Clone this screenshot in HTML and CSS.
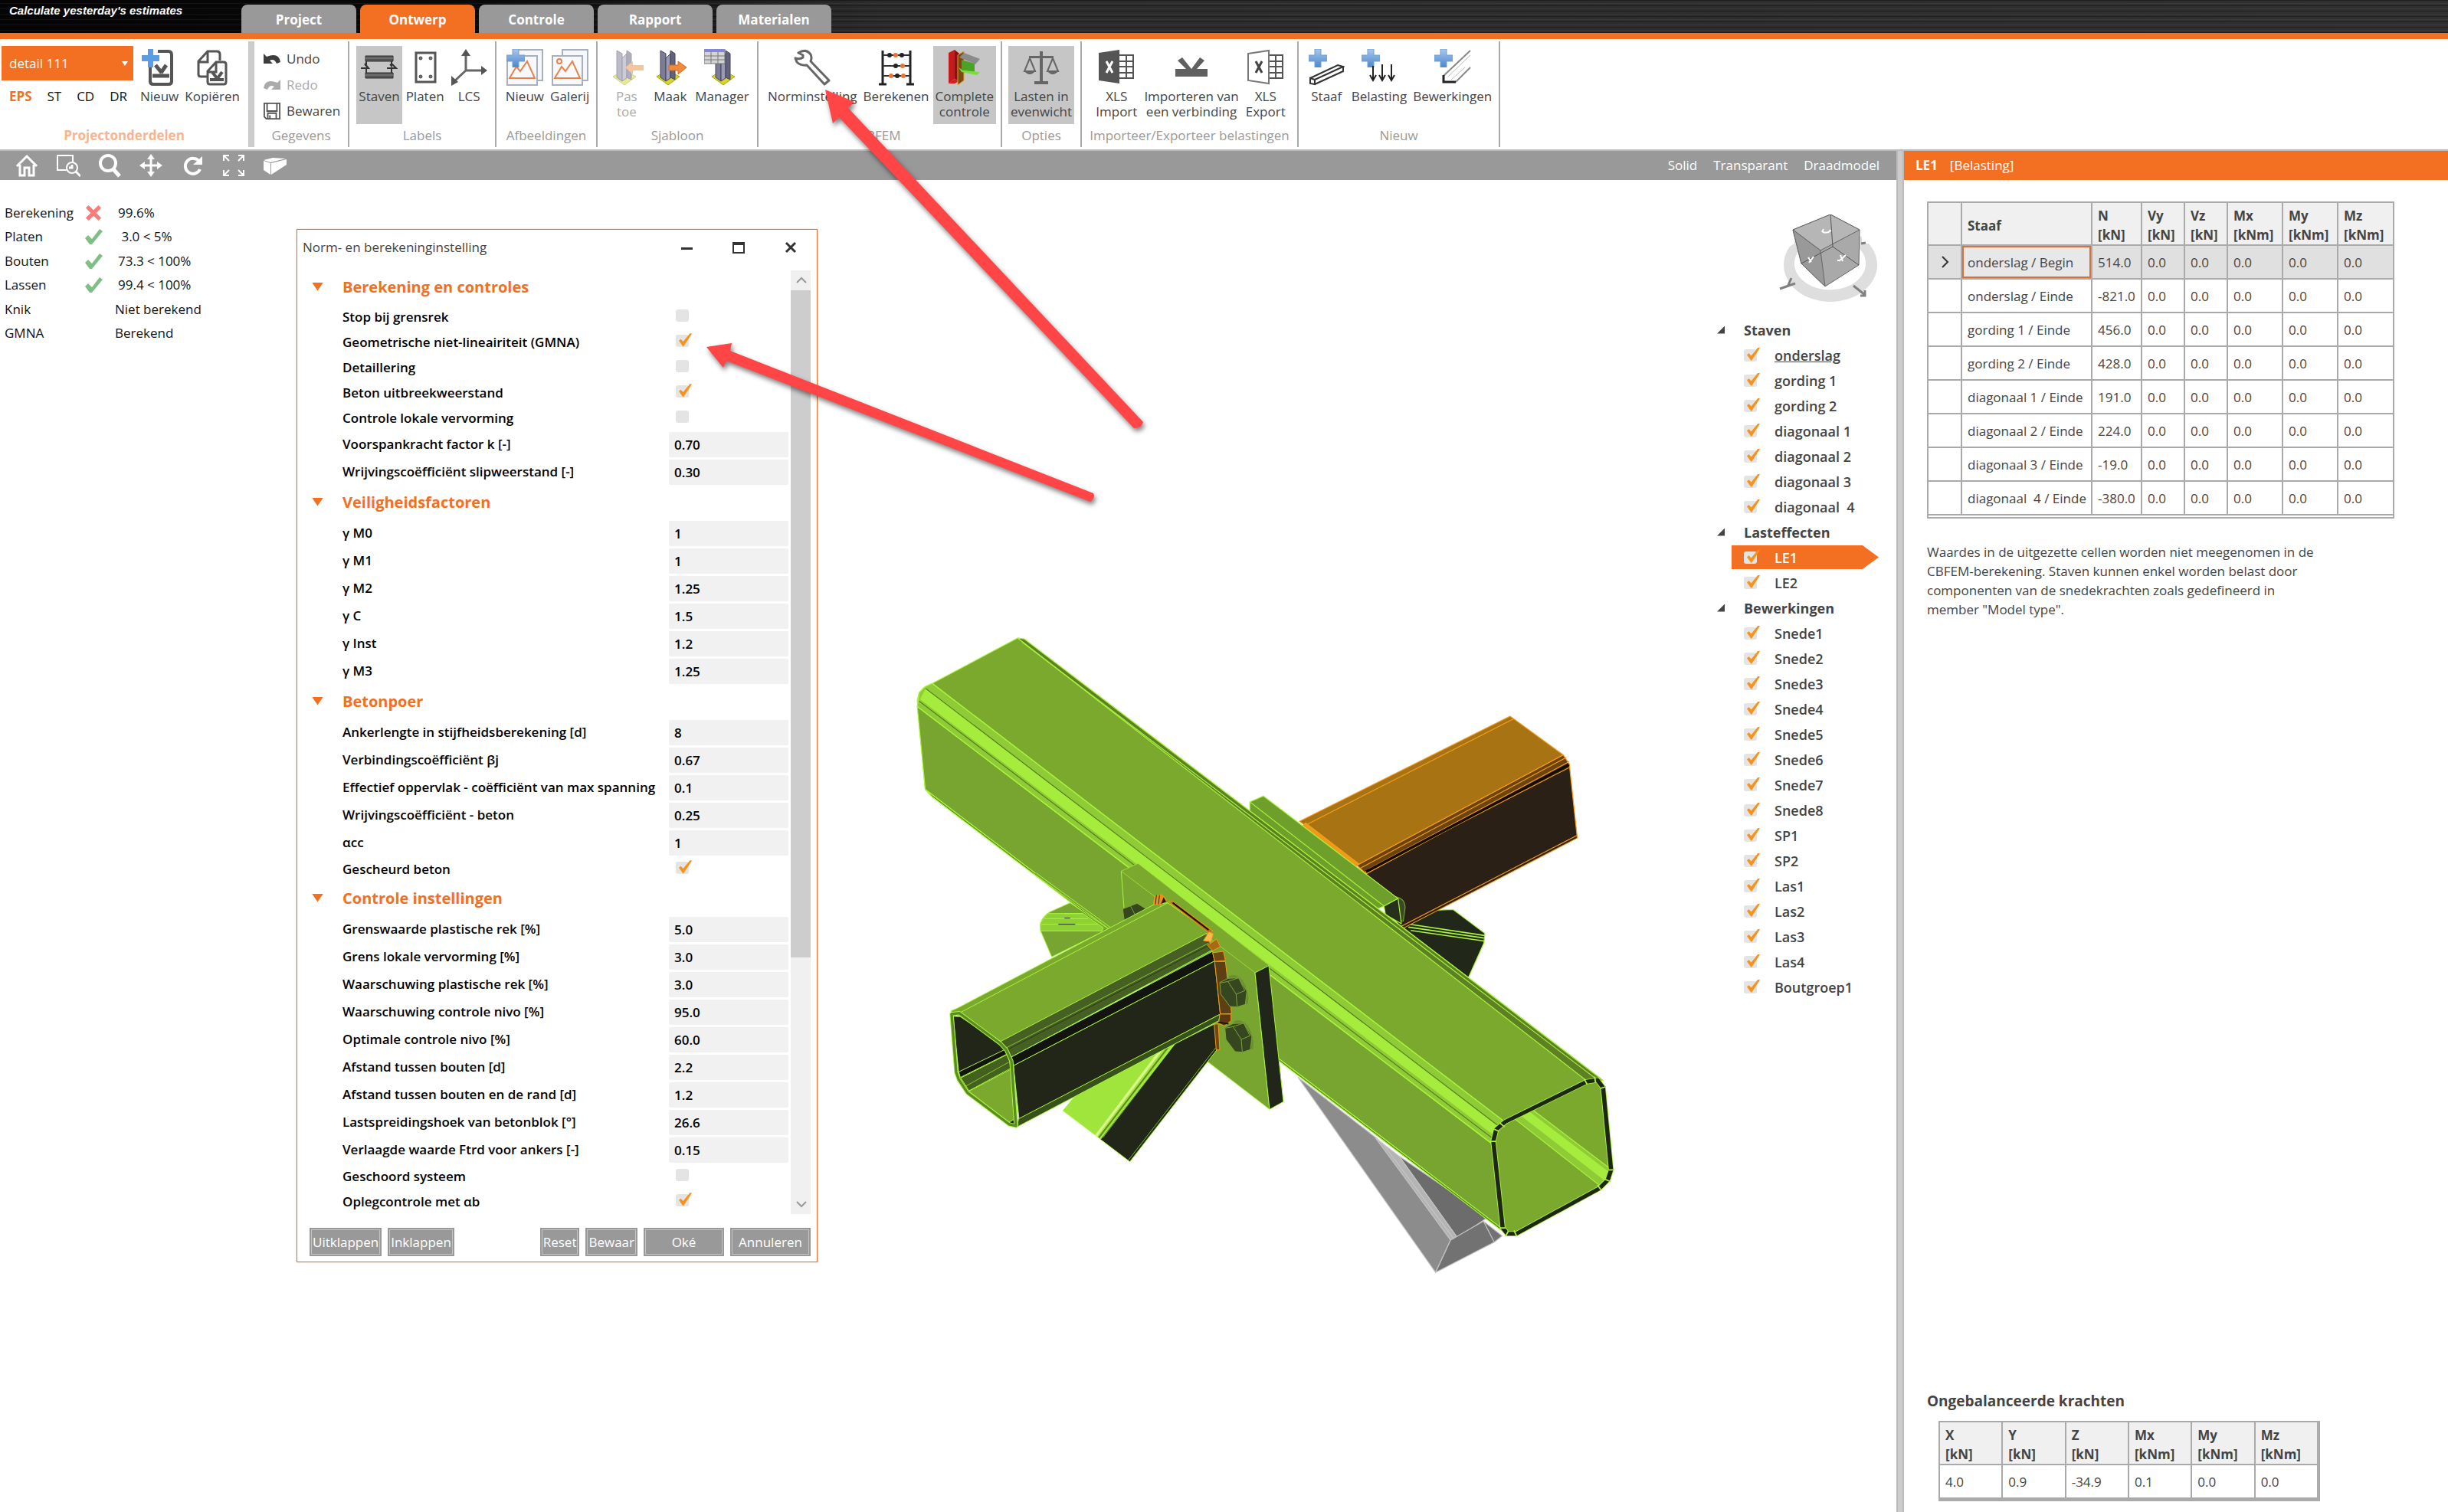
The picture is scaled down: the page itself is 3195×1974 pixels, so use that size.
FILE: index.html
```html
<!DOCTYPE html>
<html lang="nl">
<head>
<meta charset="utf-8">
<title>Verbinding – detail 111</title>
<link rel="stylesheet" href="styles.css">
</head>
<body>
<svg class="defs" aria-hidden="true">
  <defs>
    <linearGradient id="blue" x1="0" y1="0" x2="0" y2="1"><stop offset="0" stop-color="#a9c8ec"/><stop offset="1" stop-color="#4a86cc"/></linearGradient>
    <symbol id="plus" viewBox="0 0 24 24"><path d="M8 0h8v8h8v8h-8v8H8v-8H0V8h8z" fill="url(#blue)" stroke="#6f9fd6"/></symbol>
    <symbol id="column" viewBox="0 0 30 48"><path d="M0 36l14-8 16 8-15 11z" fill="#d6d62a" stroke="#a3a31a"/><path d="M5 2l7 4v36l-7-5z" fill="#7c7c96" stroke="#44445c"/><path d="M12 12l6-6v32l-6 4z" fill="#9a9ab4" stroke="#44445c"/><path d="M18 2l6 4v34l-6-3z" fill="#62627c" stroke="#44445c"/></symbol>
    <symbol id="picture" viewBox="0 0 48 48"><path d="M14 1h33v40H14z" fill="#f5f7fb" stroke="#a9b0bd" stroke-width="2"/><path d="M1 9h39v38H1z" fill="#f8f9fc" stroke="#a9b0bd" stroke-width="2"/><path d="M4 38l9-15 5 6 9-13 10 22z" fill="none" stroke="#e8824a" stroke-width="2"/></symbol>
    <symbol id="ok" viewBox="0 0 24 22"><path d="M1 13l4-4 5 5L20 1l4 3L10 21H7z" fill="#7fbf86"/></symbol>
  </defs>
</svg>

<header class="titlebar">
  <span class="slogan">Calculate yesterday's estimates</span>
  <nav class="tabs">
    <button class="tab">Project</button>
    <button class="tab tab-active">Ontwerp</button>
    <button class="tab">Controle</button>
    <button class="tab">Rapport</button>
    <button class="tab">Materialen</button>
  </nav>
</header>

<div class="ribbon">
  <section class="group group-project">
    <div class="items">
      <div class="picker">
        <select class="detail" aria-label="Detail"><option>detail 111</option></select>
        <div class="kinds">
          <button class="kind kind-active">EPS</button><button class="kind">ST</button><button class="kind">CD</button><button class="kind">DR</button>
        </div>
      </div>
      <button class="tool"><svg class="icon" viewBox="0 0 48 48"><path d="M12 22v20q0 4 4 4h20q4 0 4-4V8q0-5-4-5H22" fill="none" stroke="#555" stroke-width="4"/><path d="M15 35h22M19 21l8 10M33 21l-7 10" stroke="#555" stroke-width="5"/><path d="M9 0h7v8h8v8h-8v8H9v-8H1V8h8z" fill="#5a9de4"/></svg>Nieuw</button>
      <button class="tool"><svg class="icon" viewBox="0 0 48 48"><path d="M20 36H9q-3 0-3-3V16L18 3h12q4 0 4 4v8M6 17h12V3" fill="none" stroke="#555" stroke-width="3"/><path d="M18 29l11-12h10q3 0 3 3v23q0 3-3 3H21q-3 0-3-3zM18 30h11V17" fill="#fff" stroke="#555" stroke-width="3"/><path d="M21 40h18M24 30l6 8M37 30l-6 8" stroke="#555" stroke-width="4"/></svg>Kopiëren</button>
    </div>
    <h2 class="caption">Projectonderdelen</h2>
  </section>
  <section class="group group-data">
    <div class="items stack">
      <button class="line"><svg viewBox="0 0 24 20"><path d="M1 3v13h12l-4-4q6-3 9 4l5-2Q21 1 5 7z" fill="#3d3d3d"/></svg>Undo</button>
      <button class="line" disabled><svg viewBox="0 0 24 20"><path d="M23 3v13H11l4-4q-6-3-9 4l-5-2Q3 1 19 7z" fill="#aaa"/></svg>Redo</button>
      <button class="line"><svg viewBox="0 0 24 24"><path d="M1 1h22v22H4l-3-3zM5 1v11h14V1M6 23v-8h12v8M9 18v5" fill="none" stroke="#555" stroke-width="2"/></svg>Bewaren</button>
    </div>
    <h2 class="caption">Gegevens</h2>
  </section>
  <section class="group group-labels">
    <div class="items">
      <button class="tool tool-on"><svg class="icon" viewBox="0 0 48 48"><path d="M6 9h36v7H6zM6 31h36v7H6z" fill="#555" stroke="#333"/><path d="M6 12h36M6 34h36" stroke="#888"/><path d="M7 16v6l-2-2M0 25h10l-5-6M7 31v-5M40 16v6l-2-2M34 25h12l-6-6M40 31v-5" fill="none" stroke="#333" stroke-width="2"/></svg>Staven</button>
      <button class="tool"><svg class="icon" viewBox="0 0 48 48"><rect x="12" y="5" width="25" height="38" fill="none" stroke="#555" stroke-width="3"/><g fill="#777" stroke="#444"><circle cx="18" cy="12" r="2"/><circle cx="31" cy="12" r="2"/><circle cx="18" cy="36" r="2"/><circle cx="31" cy="36" r="2"/></g></svg>Platen</button>
      <button class="tool"><svg class="icon" viewBox="0 0 48 48"><path d="M20 6v22h24M20 28L5 42" fill="none" stroke="#666" stroke-width="3"/><path d="M20 0l6 9H14zM48 28l-8 6V22zM1 48V35l9 8z" fill="#555"/></svg>LCS</button>
    </div>
    <h2 class="caption">Labels</h2>
  </section>
  <section class="group group-images">
    <div class="items">
      <button class="tool"><svg class="icon" viewBox="0 0 48 48"><use href="#picture"/><use href="#plus" width="24" height="24"/></svg>Nieuw</button>
      <button class="tool"><svg class="icon" viewBox="0 0 48 48"><use href="#picture"/><circle cx="10" cy="16" r="3" fill="none" stroke="#e8824a" stroke-width="2"/></svg>Galerij</button>
    </div>
    <h2 class="caption">Afbeeldingen</h2>
  </section>
  <section class="group group-template">
    <div class="items">
      <button class="tool" disabled><svg class="icon faded" viewBox="0 0 48 48"><use href="#column" x="6" width="30" height="48"/><path d="M22 24l10-8v5h14v7H32v5z" fill="#f08a3c"/></svg>Pas<br>toe</button>
      <button class="tool"><svg class="icon" viewBox="0 0 48 48"><use href="#column" x="6" width="30" height="48"/><path d="M22 21h12v-5l11 8-11 9v-5H22z" fill="#f08a3c" stroke="#d86a1a"/></svg>Maak</button>
      <button class="tool"><svg class="icon" viewBox="0 0 48 48"><use href="#column" x="10" width="30" height="48"/><path d="M0 0h27v19H0z" fill="#d4d4d4" stroke="#777"/><path d="M0 0h27v4H0z" fill="#8585e0"/><path d="M0 9h27M0 14h27M9 4v15M18 4v15" stroke="#777"/></svg>Manager</button>
    </div>
    <h2 class="caption">Sjabloon</h2>
  </section>
  <section class="group group-cbfem">
    <div class="items">
      <button class="tool"><svg class="icon" viewBox="0 0 48 48"><path d="M6 5q10-6 16 2 2 5 0 9l24 25-6 5-23-25q-8 1-13-4l-2-5q6 2 10-1V8z" fill="#fff" stroke="#666" stroke-width="3" stroke-linejoin="round"/></svg>Norminstelling</button>
      <button class="tool"><svg class="icon" viewBox="0 0 48 48"><path d="M6 2v43M42 2v43M1 46h10M37 46h10" stroke="#222" stroke-width="3"/><path d="M6 8h36M6 22h36M6 35h36" stroke="#333" stroke-width="2"/><g fill="#222"><circle cx="15" cy="8" r="3"/><circle cx="31" cy="8" r="3"/><circle cx="23" cy="22" r="3"/><circle cx="25" cy="35" r="3"/></g><g fill="#f07030"><circle cx="23" cy="8" r="3"/><circle cx="32" cy="22" r="3"/><circle cx="17" cy="35" r="3"/><circle cx="33" cy="35" r="3"/></g></svg>Berekenen</button>
      <button class="tool tool-on"><svg class="icon" viewBox="0 0 48 48"><path d="M3 5l8-4v38l-8 6z" fill="#c41c1c"/><path d="M11 1l6 5v36l-6-3z" fill="#8e1010"/><path d="M3 45l8-6 6 3-6 3z" fill="#d42020"/><path d="M15 8l8-5v38l-8 6z" fill="#7a4a14" stroke="#e8a020"/><path d="M20 14l17 5v12l-17-4z" fill="#4aa322"/><path d="M16 24l6 4 22 2-4 4-20-4z" fill="#7ddc3a"/><path d="M17 11l6-6 21 8-6 7z" fill="#8b8b8b"/></svg>Complete<br>controle</button>
    </div>
    <h2 class="caption">CBFEM</h2>
  </section>
  <section class="group group-options">
    <div class="items">
      <button class="tool tool-on"><svg class="icon" viewBox="0 0 48 48"><path d="M22 3h4v39h-4zM15 42h18v4H15zM8 9h32v3H8z" fill="#666"/><path d="M9 12L2 29h14zM39 12l-7 17h14z" fill="none" stroke="#666" stroke-width="2"/><path d="M1 28h16q-8 10-16 0zM31 28h16q-8 10-16 0z" fill="#666"/></svg>Lasten in<br>evenwicht</button>
    </div>
    <h2 class="caption">Opties</h2>
  </section>
  <section class="group group-xls">
    <div class="items">
      <button class="tool"><svg class="icon" viewBox="0 0 48 48"><path d="M28 8h18v30H28M28 16h18M28 23h18M28 31h18M37 8v30" fill="none" stroke="#555" stroke-width="2"/><path d="M1 5l27-4v44L1 41z" fill="#555"/><path d="M11 16l8 15M19 16l-8 15" stroke="#fff" stroke-width="3"/></svg>XLS<br>Import</button>
      <button class="tool"><svg class="icon" viewBox="0 0 48 48"><path d="M3 26h14L6 15l6-4 12 15 11-15 6 4-10 11h14v10H3z" fill="#606060"/></svg>Importeren van<br>een verbinding</button>
      <button class="tool"><svg class="icon" viewBox="0 0 48 48"><path d="M28 8h18v30H28M28 16h18M28 23h18M28 31h18M37 8v30" fill="none" stroke="#555" stroke-width="2"/><path d="M1 6l27-4v43L1 41z" fill="#fff" stroke="#777" stroke-width="2"/><path d="M11 16l8 15M19 16l-8 15" stroke="#444" stroke-width="3"/></svg>XLS<br>Export</button>
    </div>
    <h2 class="caption">Importeer/Exporteer belastingen</h2>
  </section>
  <section class="group group-new">
    <div class="items">
      <button class="tool"><svg class="icon" viewBox="0 0 48 48"><use href="#plus" x="1" width="24" height="24"/><path d="M3 38l6 2v6l-6-1zM3 38l36-17 7 2-37 17M46 23v6L9 46" fill="#fff" stroke="#333" stroke-width="2"/></svg>Staaf</button>
      <button class="tool"><svg class="icon" viewBox="0 0 48 48"><use href="#plus" x="1" width="24" height="24"/><path d="M16 22v18m-4-6l4 7 4-7M28 20v20m-4-6l4 7 4-7M40 20v20m-4-6l4 7 4-7" fill="none" stroke="#222" stroke-width="2"/></svg>Belasting</button>
      <button class="tool"><svg class="icon" viewBox="0 0 48 48"><use href="#plus" width="24" height="24"/><path d="M47 2L12 35M47 24L28 43" stroke="#888" stroke-width="2" fill="none"/><path d="M47 8L18 36M40 24L22 40" stroke="#bbb" fill="none"/><path d="M12 34v9h16" stroke="#222" stroke-width="3" fill="none"/></svg>Bewerkingen</button>
    </div>
    <h2 class="caption">Nieuw</h2>
  </section>
</div>

<main class="workspace">
  <section class="scene">
    <div class="viewbar">
      <button class="view" aria-label="Begin"><svg viewBox="0 0 32 32"><path d="M3 17L16 4l13 13M7 15v14h6V19h6v10h6V15" fill="none" stroke="#fff" stroke-width="3"/></svg></button>
      <button class="view" aria-label="Zoom venster"><svg viewBox="0 0 32 32"><path d="M15 22H2V3h20v9" fill="none" stroke="#fff" stroke-width="2"/><circle cx="21" cy="19" r="7" fill="none" stroke="#fff" stroke-width="2"/><path d="M26 24l6 6M21 15v4h-4" stroke="#fff" stroke-width="3" fill="none"/></svg></button>
      <button class="view" aria-label="Zoom"><svg viewBox="0 0 32 32"><circle cx="14" cy="13" r="10" fill="none" stroke="#fff" stroke-width="4"/><path d="M21 21l8 9" stroke="#fff" stroke-width="5"/></svg></button>
      <button class="view" aria-label="Verplaatsen"><svg viewBox="0 0 32 32"><path d="M16 5v22M5 16h22" stroke="#fff" stroke-width="3"/><path d="M16 1l5 7H11zM16 31l5-7H11zM1 16l7-5v10zM31 16l-7-5v10z" fill="#fff"/></svg></button>
      <button class="view" aria-label="Roteren"><svg viewBox="0 0 32 32"><path d="M25 11A10 10 0 1 0 26 21" fill="none" stroke="#fff" stroke-width="4"/><path d="M29 4v11H17z" fill="#fff"/></svg></button>
      <button class="view" aria-label="Passend"><svg viewBox="0 0 32 32"><path d="M3 10V3h7M3 3l7 7M22 3h7v7M29 3l-7 7M3 22v7h7M3 29l7-7M22 29h7v-7M29 29l-7-7" fill="none" stroke="#fff" stroke-width="2"/></svg></button>
      <button class="view" aria-label="Perspectief"><svg viewBox="0 0 32 32"><path d="M1 10l9 3v15L1 22zM11 13l20-5v7L11 28zM1 9l12-3 17 1-20 5z" fill="#fff"/></svg></button>
      <div class="modes"><button class="mode">Solid</button><button class="mode">Transparant</button><button class="mode">Draadmodel</button></div>
    </div>

    <div class="canvas">
      <dl class="checks">
        <dt>Berekening</dt><dd class="mark"><svg viewBox="0 0 24 24"><path d="M1 5l4-4 7 7 7-7 4 4-7 7 7 7-4 4-7-7-7 7-4-4 7-7z" fill="#f87c7c"/></svg></dd><dd class="num">99.6%</dd>
        <dt>Platen</dt><dd class="mark"><svg><use href="#ok"/></svg></dd><dd class="num">&nbsp;3.0 &lt; 5%</dd>
        <dt>Bouten</dt><dd class="mark"><svg><use href="#ok"/></svg></dd><dd class="num">73.3 &lt; 100%</dd>
        <dt>Lassen</dt><dd class="mark"><svg><use href="#ok"/></svg></dd><dd class="num">99.4 &lt; 100%</dd>
        <dt>Knik</dt><dd class="mark"></dd><dd>Niet berekend</dd>
        <dt>GMNA</dt><dd class="mark"></dd><dd>Berekend</dd>
      </dl>

      <svg class="model" viewBox="0 0 960 860" aria-label="3D-model van de verbinding" role="img">
        <g transform="scale(.61224 .54847)" stroke-width="2" stroke-linejoin="round">
          <g stroke="#c4c4c4">
            <path d="M840 1088L1010 1235L1165 1475L1133 1552z" fill="#8c8c8c"/>
            <path d="M1055 1275L1245 1420L1180 1470z" fill="#6c6c6c"/>
            <path d="M1005 1232L1055 1275L1180 1470L1165 1475z" fill="#b4b4b4"/>
            <path d="M1165 1475L1235 1430L1275 1465L1258 1480L1133 1552z" fill="#727272"/>
            <path d="M1235 1430L1258 1480M1022 1248L1172 1472" fill="none"/>
          </g>
          <g stroke="#a9f53c">
            <path d="M1050 735L1130 690L1170 688L1238 745L1236 768L1203 850z" fill="#212819"/>
            <path d="M1070 722L1238 750M1075 730L1236 756M1080 738L1236 763" stroke-width="3" fill="none"/>
          </g>
          <g stroke="#f89c1c">
            <path d="M985 603L1418 342L1435 518L1060 735z" fill="#2a2015"/>
            <path d="M965 583L1405 320L1418 342L985 603z" fill="#6a430f"/>
            <path d="M972 590L1412 326M990 592L1418 336M982 600L1418 350" fill="none"/>
            <path d="M985 598L1417 343" stroke="#120c04" stroke-width="6"/>
            <path d="M843 478L1292 228L1405 320L965 583z" fill="#a87413"/>
            <path d="M860 485L1300 234M1060 728L1434 512" fill="none"/>
            <path d="M843 497L856 482L970 580L955 590z" fill="#f09b18"/>
          </g>
          <g stroke="#a9f53c">
            <path d="M1048 658q20 4 20 26l-4 32-12-4z" fill="#3a4a24" stroke="#6f9a30"/>
            <path d="M737 432L766 418L1053 662L1023 680L980 700L737 480z" fill="#6f9f2b"/>
            <path d="M737 432L1023 680" fill="none"/>
            <path d="M1023 680L1053 662L1060 722L1026 700z" fill="#26301a"/>
            <path d="M28 190L32 172L44 158L60 150L242 42L256 44L1485 1090L1275 1450L60 420L45 402z" fill="#7ba92e"/>
            <path d="M242 42L256 44L1490 1095L1460 1100z" fill="#5c8023"/>
            <path d="M45 402L60 420L1285 1462L1275 1448z" fill="#567a22"/>
            <path d="M28 205L1256 1248L1275 1448L45 402z" fill="#78a530"/>
            <path d="M60 150L1282 1195L1262 1212L1256 1248L28 205L32 172L44 158z" fill="#8fcb36"/>
            <path d="M46 162L1268 1206L1258 1226L34 188z" fill="#a5ec3c" stroke="none"/>
            <path d="M46 162L1268 1204M32 192L1256 1234" fill="none" stroke="#4f7a1c"/>
            <path d="M60 150L1282 1195M28 205L1256 1248M252 52L1476 1092" fill="none"/>
          </g>
          <path d="M1256 1240L1262 1212L1282 1193L1455 1098L1478 1094L1490 1112L1507 1308L1500 1332L1482 1352L1305 1460L1286 1460L1276 1446z" fill="#7ba92e"/>
          <path d="M1300 1185L1340 1165L1505 1305L1486 1348z" fill="#8fcb36"/>
          <path d="M1316 1180L1334 1170L1504 1314L1494 1334z" fill="#a5ec3c"/>
          <path d="M1300 1185L1486 1348M1340 1165L1505 1305" stroke="#a9f53c" fill="none"/>
          <path d="M1256 1240L1262 1212L1282 1193L1455 1098L1478 1094L1490 1112L1507 1308L1500 1332L1482 1352L1305 1460L1286 1460L1276 1446z" fill="none" stroke="#a9f53c" stroke-width="12"/>
          <path d="M1256 1240L1262 1212L1282 1193L1455 1098L1478 1094L1490 1112L1507 1308L1500 1332L1482 1352L1305 1460L1286 1460L1276 1446z" fill="none" stroke="#1f2615" stroke-width="9"/>
          <path d="M1250 1240h12M1256 1210l12 6M1270 1196l10 10M1450 1092l6 12M1472 1086l2 14M1484 1114l12-4M1502 1308h12M1494 1330l12 6M1478 1344l8 12M1300 1452l6 14M1282 1466l6-12M1270 1446h12" stroke="#a9f53c" stroke-width="3"/>
        </g>
        <g transform="translate(40 330) scale(.33333)" stroke="#a9f53c" stroke-width="3" stroke-linejoin="round">
          <path d="M530 116L450 152Q405 180 414 225L458 328L680 218z" fill="#78a530"/>
          <path d="M440 158L580 158L660 214L655 226L414 226L414 196z" fill="#8ed036"/>
          <path d="M430 178H600M416 200H640M508 158H580" fill="none"/><path d="M508 176h22M484 200h66" stroke="#1f2615"/>
          <path d="M384 0L680 218L720 200L460 0z" fill="#78a530" stroke="none"/>
          <path d="M384 0L680 216M398 0L690 214" fill="none"/>
          <path d="M730 -8L796 -38L1310 362L1365 895L1311 925L1068 738L900 560L745 185z" fill="#78a530" stroke="none"/>
          <path d="M730 -8L796 -38L1310 362L1254 390z" fill="#7ba92e" stroke-width="2"/>
          <path d="M730 -8L745 190M1254 390L1311 925L1068 738" fill="none"/>
          <path d="M1254 390L1308 362L1365 895L1311 925z" fill="#21261a"/>
          <path d="M736 140L792 118L828 140L820 160L742 186z" fill="#36461f" stroke="#7ba43a"/>
          <path d="M764 124L784 162L828 148M760 112Q800 96 828 136" fill="none" stroke="#7ba43a"/>
          <path d="M502 930L560 860L900 680L940 668L650 1042z" fill="#a0e53c"/>
          <path d="M648 1042L940 668L1096 590L1106 690L764 1130z" fill="#212619"/>
          <path d="M632 1028L888 690" stroke="#d9f98c" stroke-width="10"/>
          <path d="M642 1036L915 680" stroke="#5f8a22" stroke-width="6"/>
          <path d="M650 1042L930 676M658 1036L938 672M758 1124L1100 684" stroke-width="2" fill="none"/>
          <path d="M62 540L90 528L860 122L912 116L1085 236L1068 260L255 664z" fill="#7ba92e"/>
          <path d="M100 546L912 116" fill="none"/>
          <path d="M252 662L1064 236L1088 300L296 722z" fill="#465f22"/>
          <path d="M272 688L1072 274" stroke-width="2"/><path d="M276 696L1074 282" stroke="#1f2615" stroke-width="2"/>
          <path d="M296 722L1088 306L1096 344L308 754z" fill="#13130f"/>
          <path d="M308 754L1096 344L1118 552L330 964z" fill="#212619"/>
          <path d="M328 962L1118 552L1112 578L322 994z" fill="#38501c"/>
          <path d="M72 560L100 562L252 662L274 688L296 722L308 754L326 988L304 990L132 862L96 806z" fill="#212619"/>
          <path d="M94 778L276 690L288 706L100 800z" fill="#13130f"/>
          <path d="M102 802L288 708L298 764L134 852z" fill="#44601f"/>
          <path d="M134 854L298 768L318 960L290 976z" fill="#7ba92e"/>
          <path d="M118 836L290 740" stroke-width="2"/>
          <path d="M66 552L96 548L256 666L280 692L300 736L318 990L292 984L128 860L94 808L84 780z" fill="none" stroke-width="16"/>
          <path d="M66 552L96 548L256 666L280 692L300 736L318 990L292 984L128 860L94 808L84 780z" fill="none" stroke="#5d8a26" stroke-width="10"/>
          <g stroke="#f49a1c">
            <path d="M856 120L862 90L890 84L908 104L884 124z" fill="#e8901a"/><path d="M886 120L896 94L906 112z" fill="#2a1a08" stroke="none"/><path d="M868 86l-4 36M880 86l-4 36" stroke="#3a220a"/>
            <path d="M914 110L932 110L1088 226L1076 236z" fill="#b06c14"/><path d="M932 116L1072 222" stroke="#1a1006" stroke-width="6"/>
            <path d="M1052 264L1074 230L1090 238L1082 268z" fill="#ffb850"/>
            <path d="M1068 282L1104 258L1118 288L1088 304z" fill="#a86a14"/>
            <path d="M1088 312L1130 306L1138 342L1096 346z" fill="#6e4812"/>
            <path d="M1096 346L1138 346L1162 550L1118 552z" fill="#5c4014"/>
            <path d="M1116 552L1160 552L1160 578L1134 598L1112 588z" fill="#5c3a10"/>
            <path d="M1110 584L1150 590" stroke="#1a1006" stroke-width="5"/>
            <path d="M1094 592L1110 590L1116 692L1102 692z" fill="#6e4812"/>
          </g>
          <g id="bolt" stroke="#7ba43a">
            <path d="M1148 404Q1176 386 1206 418Q1236 468 1228 512L1190 520z" fill="#688f2c"/>
            <path d="M1116 428L1148 412L1190 410L1222 462L1216 514L1184 524L1156 522L1120 474z" fill="#36461f"/>
            <path d="M1148 424L1180 474L1214 460L1190 410M1180 474L1184 522M1118 430L1148 424L1190 410" fill="none"/>
          </g>
          <use href="#bolt" x="20" y="177"/>
        </g>
      </svg>

      <aside class="side">
        <svg class="cube" viewBox="0 0 130 116" aria-label="Oriëntatie" role="img">
          <path fill-rule="evenodd" d="M6 66a60 48 0 1 1 122 0a61 48 0 0 1-122 0zM20 66a46 34 0 1 0 93-4a46 34 0 0 0-93 4z" fill="#dedede"/>
          <path d="M0 0h130v38H108V20H20v18L0 50z" fill="#fff"/>
          <path d="M18 20L67 0L105 20L104 66L60 94L29 64z" fill="#a9a9a9" stroke="#666"/>
          <path d="M18 20L67 0L105 20L54 47z" fill="#b6b6b6" stroke="#666"/>
          <path d="M18 20L54 47L60 94L29 64z" fill="#999" stroke="#666"/>
          <path d="M67 0L70 42L29 64M70 42L104 66" fill="none" stroke="#555"/>
          <path d="M56 22q4 4 12-1M58 19l-2 4M64 24l3-4M38 56l4 6M45 55l-6 8M80 53l3 8M87 53l-9 8M76 60h3" stroke="#fff" stroke-width="2" fill="none"/>
          <path d="M1 97L21 90M12 92L16 83M97 93L112 105M112 99v7h-6M107 38l6-1" stroke="#808080" stroke-width="3" fill="none"/>
        </svg>
        <ul class="tree">
          <li class="branch">Staven</li>
          <li><label class="leaf"><input type="checkbox" checked><u>onderslag</u></label></li>
          <li><label class="leaf"><input type="checkbox" checked>gording 1</label></li>
          <li><label class="leaf"><input type="checkbox" checked>gording 2</label></li>
          <li><label class="leaf"><input type="checkbox" checked>diagonaal 1</label></li>
          <li><label class="leaf"><input type="checkbox" checked>diagonaal 2</label></li>
          <li><label class="leaf"><input type="checkbox" checked>diagonaal 3</label></li>
          <li><label class="leaf"><input type="checkbox" checked>diagonaal&nbsp; 4</label></li>
          <li class="branch">Lasteffecten</li>
          <li><label class="leaf leaf-on"><input type="checkbox" checked>LE1</label></li>
          <li><label class="leaf"><input type="checkbox" checked>LE2</label></li>
          <li class="branch">Bewerkingen</li>
          <li><label class="leaf"><input type="checkbox" checked>Snede1</label></li>
          <li><label class="leaf"><input type="checkbox" checked>Snede2</label></li>
          <li><label class="leaf"><input type="checkbox" checked>Snede3</label></li>
          <li><label class="leaf"><input type="checkbox" checked>Snede4</label></li>
          <li><label class="leaf"><input type="checkbox" checked>Snede5</label></li>
          <li><label class="leaf"><input type="checkbox" checked>Snede6</label></li>
          <li><label class="leaf"><input type="checkbox" checked>Snede7</label></li>
          <li><label class="leaf"><input type="checkbox" checked>Snede8</label></li>
          <li><label class="leaf"><input type="checkbox" checked>SP1</label></li>
          <li><label class="leaf"><input type="checkbox" checked>SP2</label></li>
          <li><label class="leaf"><input type="checkbox" checked>Las1</label></li>
          <li><label class="leaf"><input type="checkbox" checked>Las2</label></li>
          <li><label class="leaf"><input type="checkbox" checked>Las3</label></li>
          <li><label class="leaf"><input type="checkbox" checked>Las4</label></li>
          <li><label class="leaf"><input type="checkbox" checked>Boutgroep1</label></li>
        </ul>
      </aside>

      <section class="dialog" role="dialog" aria-labelledby="dialog-title">
        <div class="dialog-head">
          <h2 class="dialog-title" id="dialog-title">Norm- en berekeninginstelling</h2>
          <button class="win" aria-label="Minimaliseren"><svg viewBox="0 0 16 16"><path d="M1 8h15v3H1z" fill="#333"/></svg></button>
          <button class="win" aria-label="Maximaliseren"><svg viewBox="0 0 16 16"><path d="M1 2h14v13H1z" fill="none" stroke="#333" stroke-width="2"/><path d="M0 1h16v4H0z" fill="#333"/></svg></button>
          <button class="win" aria-label="Sluiten"><svg viewBox="0 0 16 16"><path d="M2 2l12 12M14 2L2 14" stroke="#333" stroke-width="3"/></svg></button>
        </div>
        <div class="dialog-body">
          <div class="settings">
            <h3 class="section">Berekening en controles</h3>
            <label class="check">Stop bij grensrek<input type="checkbox"></label>
            <label class="check">Geometrische niet-lineairiteit (GMNA)<input type="checkbox" checked></label>
            <label class="check">Detaillering<input type="checkbox"></label>
            <label class="check">Beton uitbreekweerstand<input type="checkbox" checked></label>
            <label class="check">Controle lokale vervorming<input type="checkbox"></label>
            <label class="field">Voorspankracht factor k [-]<input type="text" value="0.70"></label>
            <label class="field">Wrijvingscoëfficiënt slipweerstand [-]<input type="text" value="0.30"></label>
            <h3 class="section">Veiligheidsfactoren</h3>
            <label class="field">γ M0<input type="text" value="1"></label>
            <label class="field">γ M1<input type="text" value="1"></label>
            <label class="field">γ M2<input type="text" value="1.25"></label>
            <label class="field">γ C<input type="text" value="1.5"></label>
            <label class="field">γ Inst<input type="text" value="1.2"></label>
            <label class="field">γ M3<input type="text" value="1.25"></label>
            <h3 class="section">Betonpoer</h3>
            <label class="field">Ankerlengte in stijfheidsberekening [d]<input type="text" value="8"></label>
            <label class="field">Verbindingscoëfficiënt βj<input type="text" value="0.67"></label>
            <label class="field">Effectief oppervlak - coëfficiënt van max spanning<input type="text" value="0.1"></label>
            <label class="field">Wrijvingscoëfficiënt - beton<input type="text" value="0.25"></label>
            <label class="field">αcc<input type="text" value="1"></label>
            <label class="check">Gescheurd beton<input type="checkbox" checked></label>
            <h3 class="section">Controle instellingen</h3>
            <label class="field">Grenswaarde plastische rek [%]<input type="text" value="5.0"></label>
            <label class="field">Grens lokale vervorming [%]<input type="text" value="3.0"></label>
            <label class="field">Waarschuwing plastische rek [%]<input type="text" value="3.0"></label>
            <label class="field">Waarschuwing controle nivo [%]<input type="text" value="95.0"></label>
            <label class="field">Optimale controle nivo [%]<input type="text" value="60.0"></label>
            <label class="field">Afstand tussen bouten [d]<input type="text" value="2.2"></label>
            <label class="field">Afstand tussen bouten en de rand [d]<input type="text" value="1.2"></label>
            <label class="field">Lastspreidingshoek van betonblok [°]<input type="text" value="26.6"></label>
            <label class="field">Verlaagde waarde Ftrd voor ankers [-]<input type="text" value="0.15"></label>
            <label class="check">Geschoord systeem<input type="checkbox"></label>
            <label class="check">Oplegcontrole met αb<input type="checkbox" checked></label>
          </div>
          <div class="scroll">
            <button class="scroll-end" aria-label="Omhoog"><svg viewBox="0 0 26 26"><path d="M8 16l6-6 6 6" fill="none" stroke="#999" stroke-width="2"/></svg></button>
            <div class="thumb"></div>
            <button class="scroll-end" aria-label="Omlaag"><svg viewBox="0 0 26 26"><path d="M8 10l6 6 6-6" fill="none" stroke="#999" stroke-width="2"/></svg></button>
          </div>
        </div>
        <div class="dialog-foot">
          <button class="push">Uitklappen</button>
          <button class="push">Inklappen</button>
          <span class="spacer"></span>
          <button class="push">Reset</button>
          <button class="push">Bewaar</button>
          <button class="push push-wide">Oké</button>
          <button class="push push-wide">Annuleren</button>
        </div>
      </section>
    </div>
  </section>

  <div class="splitter"></div>

  <section class="panel">
    <h2 class="panel-head"><b>LE1</b><span>[Belasting]</span></h2>
    <div class="panel-body">
      <div class="frame">
        <table class="grid loads">
          <colgroup><col class="c-mark"><col class="c-name"><col class="c-n"><col class="c-v"><col class="c-v"><col class="c-m"><col class="c-m"><col></colgroup>
          <thead><tr><th></th><th>Staaf</th><th>N<br>[kN]</th><th>Vy<br>[kN]</th><th>Vz<br>[kN]</th><th>Mx<br>[kNm]</th><th>My<br>[kNm]</th><th>Mz<br>[kNm]</th></tr></thead>
          <tbody>
            <tr class="current"><td class="marker"><svg viewBox="0 0 12 16"><path d="M2 1l7 7-7 7" fill="none" stroke="#333" stroke-width="2"/></svg></td><td class="focus">onderslag / Begin</td><td>514.0</td><td>0.0</td><td>0.0</td><td>0.0</td><td>0.0</td><td>0.0</td></tr>
            <tr><td></td><td>onderslag / Einde</td><td>-821.0</td><td>0.0</td><td>0.0</td><td>0.0</td><td>0.0</td><td>0.0</td></tr>
            <tr><td></td><td>gording 1 / Einde</td><td>456.0</td><td>0.0</td><td>0.0</td><td>0.0</td><td>0.0</td><td>0.0</td></tr>
            <tr><td></td><td>gording 2 / Einde</td><td>428.0</td><td>0.0</td><td>0.0</td><td>0.0</td><td>0.0</td><td>0.0</td></tr>
            <tr><td></td><td>diagonaal 1 / Einde</td><td>191.0</td><td>0.0</td><td>0.0</td><td>0.0</td><td>0.0</td><td>0.0</td></tr>
            <tr><td></td><td>diagonaal 2 / Einde</td><td>224.0</td><td>0.0</td><td>0.0</td><td>0.0</td><td>0.0</td><td>0.0</td></tr>
            <tr><td></td><td>diagonaal 3 / Einde</td><td>-19.0</td><td>0.0</td><td>0.0</td><td>0.0</td><td>0.0</td><td>0.0</td></tr>
            <tr><td></td><td>diagonaal&nbsp; 4 / Einde</td><td>-380.0</td><td>0.0</td><td>0.0</td><td>0.0</td><td>0.0</td><td>0.0</td></tr>
          </tbody>
        </table>
      </div>
      <p class="note">Waardes in de uitgezette cellen worden niet meegenomen in de CBFEM-berekening. Staven kunnen enkel worden belast door componenten van de snedekrachten zoals gedefineerd in member "Model type".</p>
      <h3 class="subhead">Ongebalanceerde krachten</h3>
      <div class="frame frame-small">
        <table class="grid">
          <thead><tr><th>X<br>[kN]</th><th>Y<br>[kN]</th><th>Z<br>[kN]</th><th>Mx<br>[kNm]</th><th>My<br>[kNm]</th><th>Mz<br>[kNm]</th></tr></thead>
          <tbody><tr><td>4.0</td><td>0.9</td><td>-34.9</td><td>0.1</td><td>0.0</td><td>0.0</td></tr></tbody>
        </table>
      </div>
    </div>
  </section>
</main>

<svg class="arrows" viewBox="900 100 620 580" aria-hidden="true">
  <path d="M1077 117L1115 133L1107 141L1492 551Q1490 559 1480 559L1095 153L1087 161z" fill="#ff4545"/>
  <path d="M922 453L955 448L953 458L1427 644Q1430 650 1423 655L948 471L944 480z" fill="#ff4545"/>
</svg>
</body>
</html>
```
FILE: styles.css
```css
* { box-sizing: border-box; }

body {
  margin: 0;
  min-height: 100vh;
  display: flex;
  flex-direction: column;
  position: relative;
  background: #fff;
  color: #444;
  font: 17px/20px "Open Sans", "Noto Sans", sans-serif;
}

h2, h3, p, dl, dd, ul { margin: 0; padding: 0; font-weight: 400; font-size: inherit; }
ul { list-style: none; }
svg { display: block; }
.defs { position: absolute; width: 0; height: 0; }

button {
  margin: 0;
  padding: 0;
  border: 0;
  background: none;
  color: inherit;
  font: inherit;
}
button:disabled { color: #aaa; }

/* title bar and tabs */
.titlebar {
  height: 51px;
  display: flex;
  align-items: flex-end;
  border-bottom: 8px solid #f36f21;
  background:
    repeating-linear-gradient(0deg, rgba(0,0,0,.35) 0 1px, transparent 1px 3px, rgba(255,255,255,.05) 3px 4px, transparent 4px 7px),
    linear-gradient(90deg, #050505 0, #0a0a0a 20%, #2b2b2b 36%, #303030 100%);
}
.slogan {
  flex: 0 0 315px;
  align-self: flex-start;
  padding: 4px 0 0 12px;
  color: #fff;
  font: italic 700 15px/20px "Liberation Sans", sans-serif;
}
.tabs { display: flex; gap: 5px; }
.tab {
  width: 150px;
  height: 37px;
  padding-top: 2px;
  border-radius: 8px 8px 0 0;
  background: #999;
  color: #fff;
  font-weight: 700;
}
.tab-active { background: #f36f21; }

/* ribbon */
.ribbon {
  display: flex;
  padding: 3px 0;
  border-bottom: 2px solid #bbb;
}
.group {
  height: 138px;
  display: flex;
  flex-direction: column;
  border-right: 2px solid #aaa;
}
.group-project { width: 332px; border-right: 8px solid #ccc; }
.group-data { width: 124px; }
.group-labels { width: 192px; }
.group-images { width: 132px; }
.group-template { width: 210px; }
.group-cbfem { width: 318px; }
.group-options { width: 104px; }
.group-xls { width: 283px; }
.group-new { width: 263px; }
.items {
  display: flex;
  justify-content: center;
  gap: 2px;
  padding: 6px 0 0 3px;
}
.group-xls .items { gap: 3px; }
.group-options .items { padding-left: 0; }
.group-project .items { justify-content: flex-start; padding-left: 2px; }
.caption { line-height: 30px; text-align: center; color: #999; white-space: nowrap; }
.group-project .caption { color: #f7b48f; font-weight: 700; }
.tool {
  height: 102px;
  min-width: 55px;
  padding: 4px 3px 0;
  display: flex;
  flex-direction: column;
  align-items: center;
  white-space: nowrap;
}
.tool-on { background: #c6c6c6; }
.icon { flex: none; width: 48px; height: 48px; margin-bottom: 4px; }
.faded { opacity: .5; }
.picker { position: relative; width: 172px; margin-right: 4px; }
.picker::after {
  content: "";
  position: absolute;
  right: 7px;
  top: 20px;
  border: 4px solid transparent;
  border-top: 6px solid #fff;
  border-bottom: 0;
}
.detail {
  appearance: none;
  width: 172px;
  height: 45px;
  padding: 0 10px;
  border: 0;
  border-radius: 0;
  background: #f36f21;
  color: #fff;
  font: inherit;
}
.kinds { display: flex; justify-content: space-between; padding: 11px 8px 0 10px; color: #111; }
.kind-active { color: #f36f21; font-weight: 700; }
.stack { flex-direction: column; gap: 0; padding-left: 11px; height: 108px; justify-content: flex-start; }
.line { height: 34px; display: flex; align-items: center; gap: 7px; }
.line svg { width: 24px; height: 22px; }

/* workspace */
.workspace { flex: 1; display: flex; }
.scene { flex: 1; display: flex; flex-direction: column; }
.viewbar {
  height: 38px;
  display: flex;
  align-items: center;
  gap: 22px;
  padding: 0 22px 0 19px;
  background: #999;
}
.view svg { width: 32px; height: 32px; }
.modes { margin-left: auto; display: flex; gap: 21px; color: #fff; }
.canvas { flex: 1; display: flex; justify-content: space-between; position: relative; }

.checks {
  height: 189px;
  margin: 27px 0 0 6px;
  display: grid;
  grid-template-columns: 104px 40px 140px;
  grid-auto-rows: 1fr;
  align-items: center;
  color: #111;
}
.checks svg { width: 24px; height: 22px; }
.num { padding-left: 4px; }

.model { position: absolute; left: 1180px; top: 575px; width: 960px; height: 860px; }

.side { width: 240px; padding-top: 45px; position: relative; }
.cube { width: 130px; height: 116px; margin-left: 87px; }
.tree { padding: 18px 23px 0 6px; font-size: 18px; font-weight: 600; }
.branch { height: 33px; display: flex; align-items: center; font-weight: 700; }
.branch::before {
  content: "";
  width: 10px;
  height: 10px;
  margin-right: 25px;
  background: #444;
  clip-path: polygon(100% 0, 100% 100%, 0 100%);
}
.leaf { height: 33px; margin-left: 19px; padding-left: 16px; display: flex; align-items: center; gap: 23px; }
.leaf-on { background: #f36f21; color: #fff; clip-path: polygon(0 1px, 89% 1px, 100% 50%, 89% 32px, 0 32px); }

input[type="checkbox"] {
  appearance: none;
  flex: none;
  width: 17px;
  height: 16px;
  margin: 0;
  border-radius: 3px;
  background: #e4e4e4;
  position: relative;
}
input[type="checkbox"]:checked::before {
  content: "";
  position: absolute;
  left: 4px;
  top: -2px;
  width: 17px;
  height: 17px;
  background: #f7931a;
  clip-path: polygon(0 58%, 15% 45%, 33% 64%, 86% 0, 100% 5%, 37% 100%, 30% 100%);
}

/* settings dialog */
.dialog {
  position: absolute;
  left: 387px;
  top: 64px;
  width: 680px;
  border: 1px solid #e2702f;
  box-shadow: 0 0 2px #f9c9a6;
  background: #fff;
}
.dialog-head { height: 53px; padding: 6px 26px 14px 7px; display: flex; align-items: center; gap: 52px; }
.dialog-title { flex: 1; }
.win svg { width: 16px; height: 16px; }
.dialog-body { display: flex; padding-right: 8px; }
.settings { flex: 1; padding: 0 3px 0 59px; color: #000; font-weight: 600; }
.section {
  height: 44px;
  display: flex;
  align-items: center;
  color: #f36f21;
  font-size: 20px;
  font-weight: 700;
}
.section::before {
  content: "";
  width: 15px;
  height: 11px;
  margin: -2px 25px 0 -40px;
  background: #f36f21;
  clip-path: polygon(0 0, 100% 0, 50% 100%);
}
.check, .field { display: flex; align-items: center; justify-content: space-between; }
.check { height: 33px; padding-right: 130px; }
.check input { align-self: flex-start; margin-top: 7px; }
.field { height: 36px; }
.field input {
  width: 156px;
  height: 33px;
  padding: 0 7px;
  border: 0;
  border-radius: 2px;
  background: #f1f1f1;
  color: #000;
  font: inherit;
}
.scroll { width: 26px; display: flex; flex-direction: column; justify-content: space-between; background: #f0f0f0; }
.scroll-end svg { width: 26px; height: 26px; }
.thumb { height: 871px; margin-bottom: auto; background: #cdcdcd; }
.dialog-foot { display: flex; gap: 8px; padding: 18px 8px 7px 16px; }
.spacer { flex: 1; }
.push {
  height: 37px;
  padding: 0 3px;
  border: 1px solid #999;
  outline: 1px solid #c4c4c4;
  outline-offset: -3px;
  background: #999;
  color: #fff;
}
.push-wide { width: 105px; }

/* load panel */
.splitter { width: 10px; border: solid #bbb; border-width: 0 2px; background: #ccc; }
.panel { width: 710px; display: flex; flex-direction: column; }
.panel-head { height: 38px; display: flex; align-items: center; gap: 16px; padding-left: 15px; background: #f36f21; color: #fff; }
.panel-body { flex: 1; display: flex; flex-direction: column; padding: 28px 70px 14px 30px; }
.frame { width: 610px; border: 2px solid #aaa; padding-bottom: 2px; }
.grid { width: 100%; table-layout: fixed; border-collapse: separate; border-spacing: 0; }
.grid th, .grid td {
  height: 44px;
  padding: 2px 0 0 7px;
  border: solid #aaa;
  border-width: 0 2px 2px 0;
  text-align: left;
  white-space: nowrap;
}
.grid th { height: 56px; padding-top: 4px; background: #f0f0f0; line-height: 25px; font-weight: 700; }
.loads th:last-child, .loads td:last-child { border-right: 0; }
.c-mark { width: 44px; }
.c-name { width: 170px; }
.c-n { width: 65px; }
.c-v { width: 56px; }
.c-m { width: 72px; }
.current td { background: #e0e0e0; }
.grid .marker { padding: 0 0 0 16px; }
.marker svg { width: 12px; height: 16px; }
.grid .focus { background: #e8e8e8; box-shadow: inset 0 0 0 2px #d9703a; }
.note { width: 520px; margin-top: 31px; line-height: 25px; }
.subhead { margin: auto 0 14px; font-size: 19px; font-weight: 700; line-height: 24px; }
.frame-small { width: 498px; margin-left: 15px; padding: 0; border-bottom-width: 3px; }

/* pointers laid over the whole window */
.arrows {
  position: absolute;
  left: 900px;
  top: 100px;
  width: 620px;
  height: 580px;
  pointer-events: none;
  filter: drop-shadow(2px 4px 3px rgba(0,0,0,.5));
}
```
